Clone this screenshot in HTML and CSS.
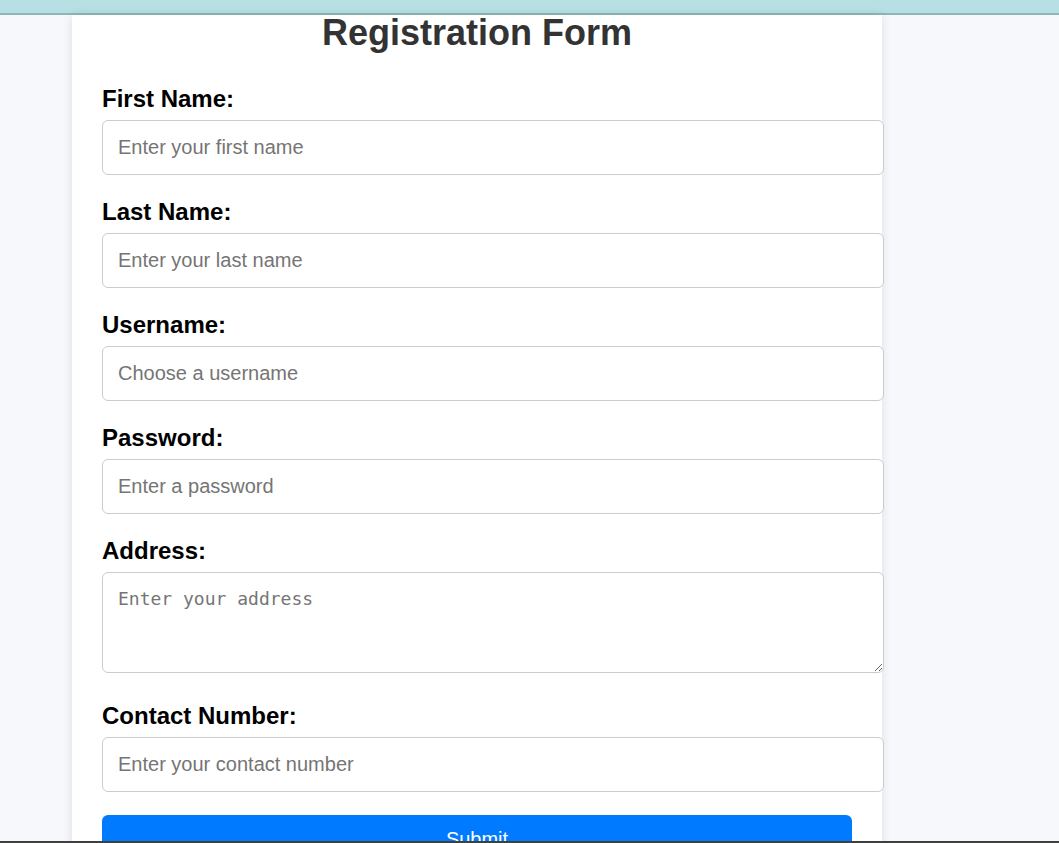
FILE: index.html
```html
<!DOCTYPE html>
<html lang="en">
<head>
<meta charset="utf-8">
<title>Registration Form</title>
<link rel="stylesheet" href="styles.css">
</head>
<body>
<div class="topbar"></div>
<div class="container">
  <h1 class="title">Registration Form</h1>
  <form class="form">
    <label class="label" for="first">First Name:</label>
    <input class="field" id="first" type="text" placeholder="Enter your first name">
    <label class="label" for="last">Last Name:</label>
    <input class="field" id="last" type="text" placeholder="Enter your last name">
    <label class="label" for="user">Username:</label>
    <input class="field" id="user" type="text" placeholder="Choose a username">
    <label class="label" for="pass">Password:</label>
    <input class="field" id="pass" type="password" placeholder="Enter a password">
    <label class="label" for="addr">Address:</label>
    <textarea class="field area" id="addr" placeholder="Enter your address"></textarea>
    <label class="label" for="phone">Contact Number:</label>
    <input class="field" id="phone" type="tel" placeholder="Enter your contact number">
    <button class="submit" type="button">Submit</button>
  </form>
</div>
<div class="bottomline"></div>
</body>
</html>
```
FILE: styles.css
```css
html, body {
  margin: 0;
  padding: 0;
}
body {
  background: #f7f8fc;
  font-family: "Liberation Sans", Arial, sans-serif;
  height: 843px;
  overflow: hidden;
}
.topbar {
  height: 13px;
  background: #b7e0e4;
  border-bottom: 2px solid #8fb6b8;
}
.container {
  width: 750px;
  margin-left: 72px;
  padding: 0 30px 40px;
  background: #ffffff;
  box-shadow: 0 0 10px rgba(0, 0, 0, 0.1);
}
.title {
  margin: 0;
  font-size: 36px;
  line-height: 36px;
  font-weight: bold;
  color: #333333;
  text-align: center;
}
.form {
  display: flex;
  flex-direction: column;
  align-items: flex-start;
  padding-top: 34px;
}
.label {
  display: block;
  font-size: 24px;
  line-height: 28px;
  font-weight: bold;
  color: #000000;
  margin-bottom: 7px;
}
.field {
  box-sizing: content-box;
  width: 100%;
  padding: 15px;
  margin: 0 0 23px;
  border: 1px solid #cccccc;
  border-radius: 6px;
  font-family: "Liberation Sans", Arial, sans-serif;
  font-size: 20px;
  line-height: 23px;
  color: #333333;
  background: #ffffff;
  outline: none;
}
.field::placeholder {
  color: #757575;
}
.area {
  box-sizing: border-box;
  width: calc(100% + 32px);
  height: 101px;
  margin-bottom: 29px;
  font-family: "DejaVu Sans Mono", "Liberation Mono", monospace;
  font-size: 18px;
  line-height: 21px;
  resize: both;
}
.submit {
  display: block;
  width: 100%;
  margin-top: 0;
  padding: 13px 0;
  border: none;
  border-radius: 6px;
  background: #007bff;
  color: #ffffff;
  font-family: "Liberation Sans", Arial, sans-serif;
  font-size: 20px;
  line-height: 23px;
}
.bottomline {
  position: fixed;
  left: 0;
  right: 0;
  bottom: 0;
  height: 2px;
  background: #3f3f3f;
}
```
